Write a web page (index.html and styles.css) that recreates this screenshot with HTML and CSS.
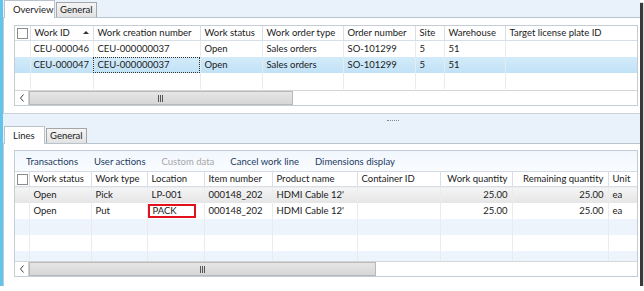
FILE: index.html
```html
<!DOCTYPE html>
<html lang="en">
<head>
    <meta charset="UTF-8">
    <meta name="viewport" content="width=device-width, initial-scale=1.0">
    <title>Work</title>
    <link rel="stylesheet" href="styles.css">
</head>
<body>

    <div class="window">

        <div class="tabstrip">
            <div class="tab active overview-tab">Overview</div>
            <div class="tab">General</div>
        </div>

        <div class="panel top-panel">
            <div class="grid top-grid">
                <div class="grid-body">
                    <table class="work-table">
                        <colgroup>
                            <col style="width: 15px">
                            <col style="width: 63px">
                            <col style="width: 107px">
                            <col style="width: 62px">
                            <col style="width: 81px">
                            <col style="width: 72px">
                            <col style="width: 29px">
                            <col style="width: 61px">
                            <col style="width: 132px">
                        </colgroup>
                        <tr class="head-row">
                            <th class="chk-cell"><span class="checkbox"></span></th>
                            <th>Work ID<span class="sort-arrow"></span></th>
                            <th>Work creation number</th>
                            <th>Work status</th>
                            <th>Work order type</th>
                            <th>Order number</th>
                            <th>Site</th>
                            <th>Warehouse</th>
                            <th>Target license plate ID</th>
                        </tr>
                        <tr>
                            <td class="chk-cell"></td>
                            <td class="first">CEU-000046</td>
                            <td>CEU-000000037</td>
                            <td>Open</td>
                            <td>Sales orders</td>
                            <td>SO-101299</td>
                            <td>5</td>
                            <td>51</td>
                            <td></td>
                        </tr>
                        <tr class="selected">
                            <td class="chk-cell"></td>
                            <td class="first">CEU-000047</td>
                            <td class="focus">CEU-000000037</td>
                            <td>Open</td>
                            <td>Sales orders</td>
                            <td>SO-101299</td>
                            <td>5</td>
                            <td>51</td>
                            <td></td>
                        </tr>
                        <tr class="empty">
                            <td class="chk-cell"></td>
                            <td></td><td></td><td></td><td></td><td></td><td></td><td></td><td></td>
                        </tr>
                    </table>
                </div>
                <div class="hscroll">
                    <div class="sb-btn">
                        <svg width="6" height="8" viewBox="0 0 6 8"><path d="M4.5 0.5 L1.5 4 L4.5 7.5" fill="none" stroke="#404040" stroke-width="1"/></svg>
                    </div>
                    <div class="sb-thumb top-thumb">
                        <svg width="6" height="7" viewBox="0 0 6 7"><path d="M0.5 0 V7 M2.5 0 V7 M4.5 0 V7" stroke="#555" stroke-width="1"/></svg>
                    </div>
                </div>
            </div>
        </div>

        <div class="splitter"><span class="grip"></span></div>

        <div class="tabstrip lower-tabs">
            <div class="tab active lines-tab">Lines</div>
            <div class="tab">General</div>
        </div>

        <div class="panel bottom-panel">
            <div class="grid bottom-grid">
                <div class="toolbar">
                    <span class="tool">Transactions</span>
                    <span class="tool">User actions</span>
                    <span class="tool disabled">Custom data</span>
                    <span class="tool">Cancel work line</span>
                    <span class="tool">Dimensions display</span>
                </div>
                <div class="grid-body">
                    <table class="work-table">
                        <colgroup>
                            <col style="width: 14px">
                            <col style="width: 62px">
                            <col style="width: 56px">
                            <col style="width: 57px">
                            <col style="width: 68px">
                            <col style="width: 85px">
                            <col style="width: 83px">
                            <col style="width: 72px">
                            <col style="width: 96px">
                            <col style="width: 29px">
                        </colgroup>
                        <tr class="head-row lines-head">
                            <th class="chk-cell"><span class="checkbox"></span></th>
                            <th>Work status</th>
                            <th>Work type</th>
                            <th>Location</th>
                            <th>Item number</th>
                            <th>Product name</th>
                            <th>Container ID</th>
                            <th class="num">Work quantity</th>
                            <th class="num">Remaining quantity</th>
                            <th>Unit</th>
                        </tr>
                        <tr class="inactive-sel">
                            <td class="chk-cell"></td>
                            <td>Open</td>
                            <td>Pick</td>
                            <td>LP-001</td>
                            <td>000148_202</td>
                            <td>HDMI Cable 12'</td>
                            <td></td>
                            <td class="num">25.00</td>
                            <td class="num">25.00</td>
                            <td>ea</td>
                        </tr>
                        <tr>
                            <td class="chk-cell"></td>
                            <td>Open</td>
                            <td>Put</td>
                            <td class="marked-cell"><span class="marked">PACK</span></td>
                            <td>000148_202</td>
                            <td>HDMI Cable 12'</td>
                            <td></td>
                            <td class="num">25.00</td>
                            <td class="num">25.00</td>
                            <td>ea</td>
                        </tr>
                        <tr class="alt empty">
                            <td class="chk-cell"></td>
                            <td></td><td></td><td></td><td></td><td></td><td></td><td></td><td></td><td></td>
                        </tr>
                        <tr class="empty">
                            <td class="chk-cell"></td>
                            <td></td><td></td><td></td><td></td><td></td><td></td><td></td><td></td><td></td>
                        </tr>
                        <tr class="alt empty">
                            <td class="chk-cell"></td>
                            <td></td><td></td><td></td><td></td><td></td><td></td><td></td><td></td><td></td>
                        </tr>
                    </table>
                </div>
                <div class="hscroll">
                    <div class="sb-btn">
                        <svg width="6" height="8" viewBox="0 0 6 8"><path d="M4.5 0.5 L1.5 4 L4.5 7.5" fill="none" stroke="#404040" stroke-width="1"/></svg>
                    </div>
                    <div class="sb-thumb bottom-thumb">
                        <svg width="6" height="7" viewBox="0 0 6 7"><path d="M0.5 0 V7 M2.5 0 V7 M4.5 0 V7" stroke="#555" stroke-width="1"/></svg>
                    </div>
                </div>
            </div>
        </div>

    </div>

</body>
</html>
```

FILE: styles.css
```css
body {
    margin: 0;
    padding: 0;
    background-color: #fff;
    font-family: Lato, "Segoe UI", sans-serif;
    font-size: 9.5px;
    color: #1a1a1a;
}

.window {
    width: 640px;
    height: 286px;
    box-sizing: border-box;
    border-left: 3px solid #62c4e8;
    background-color: #e9f2fb;
    box-shadow: 3px 3px 1px #3a3a3a;
    display: flex;
    flex-direction: column;
}

/* tabs */
.tabstrip {
    height: 17px;
    display: flex;
    align-items: flex-end;
    padding-left: 1px;
    gap: 1px;
}

.tab {
    height: 15px;
    line-height: 14px;
    padding: 0 3px;
    box-sizing: border-box;
    border: 1px solid #a7a7a7;
    border-bottom: none;
    background: linear-gradient(#f4f4f4, #e2e2e2);
}

.tab.active {
    height: 18px;
    line-height: 17px;
    padding-left: 8px;
    margin-bottom: -1px;
    position: relative;
    background: #fff;
    border-color: #b8c3ce;
}

.overview-tab {
    width: 51px;
}

.lines-tab {
    width: 41px;
}

/* panels */
.panel {
    background-color: #fff;
    border-top: 1px solid #b8c3ce;
    border-left: 1px solid #c3ccd6;
}

.top-panel {
    height: 95px;
}

.bottom-panel {
    flex: 1;
}

.splitter {
    height: 12px;
    border-top: 1px solid #c9d1da;
    display: flex;
    align-items: center;
}

.splitter .grip {
    width: 12px;
    margin-left: 384px;
    border-top: 1px dotted #7f8a96;
}

/* grids */
.grid {
    margin: 7px 2px 0 10px;
    border: 1px solid #c4ccd5;
    background-color: #fff;
    box-sizing: border-box;
    display: flex;
    flex-direction: column;
}

.top-grid {
    height: 81px;
}

.bottom-grid {
    margin-top: 6px;
    height: 127px;
}

.grid-body {
    flex: 1;
    overflow: hidden;
}

.work-table {
    width: 622px;
    table-layout: fixed;
    border-collapse: collapse;
}

.work-table th,
.work-table td {
    padding: 0 3px 0 4px;
    white-space: nowrap;
    overflow: hidden;
    text-align: left;
    font-weight: normal;
}

.work-table th {
    height: 14px;
    line-height: 14px;
    border-right: 1px solid #d8dfe7;
    border-bottom: 1px solid #d8dfe7;
}

.work-table td {
    height: 16px;
    line-height: 16px;
    border-right: 1px solid #e7ecf1;
}

.work-table td.first {
    padding-left: 3px;
}

.work-table .chk-cell {
    padding: 0 0 0 2px;
}

.work-table .num {
    text-align: right;
    padding-right: 4px;
}

.checkbox {
    display: block;
    width: 9px;
    height: 9px;
    border: 1px solid #8c8c8c;
    background: #fff;
}

.sort-arrow {
    display: inline-block;
    margin-left: 13px;
    vertical-align: 2px;
    border-left: 3px solid transparent;
    border-right: 3px solid transparent;
    border-bottom: 3px solid #333;
}

.selected td {
    background: linear-gradient(#d3ebf9, #c0e1f6);
}

.selected td.focus {
    outline: 1px dotted #333;
    outline-offset: -1px;
}

.inactive-sel td {
    background: linear-gradient(#f5f5f5, #e5e5e5);
}

.alt td {
    background-color: #edf4fc;
}

.marked-cell {
    padding: 0 !important;
}

.marked {
    display: block;
    width: 48px;
    height: 14px;
    margin: 1px 0;
    box-sizing: border-box;
    border: 2px solid #e2121d;
    padding-left: 3px;
    line-height: 10px;
}

/* toolbar */
.toolbar {
    height: 21px;
    box-sizing: border-box;
    padding-left: 11px;
    display: flex;
    align-items: center;
    gap: 16px;
    background: linear-gradient(#f1f7fe, #fafcff);
    border-bottom: 1px solid #d3dbe4;
}

.tool {
    color: #1d3a61;
}

.tool.disabled {
    color: #a6a6a6;
}

/* scrollbars */
.hscroll {
    height: 14px;
    display: flex;
    border-top: 1px solid #d6d6d6;
    background: #fff;
}

.sb-btn {
    width: 14px;
    box-sizing: border-box;
    display: flex;
    align-items: center;
    justify-content: center;
    border-right: 1px solid #d0d0d0;
}

.sb-thumb {
    box-sizing: border-box;
    display: flex;
    align-items: center;
    justify-content: center;
    background: linear-gradient(#e6e6e6, #d6d6d6);
    border: 1px solid #b9b9b9;
}

.top-thumb {
    width: 264px;
}

.bottom-thumb {
    width: 347px;
}
```
